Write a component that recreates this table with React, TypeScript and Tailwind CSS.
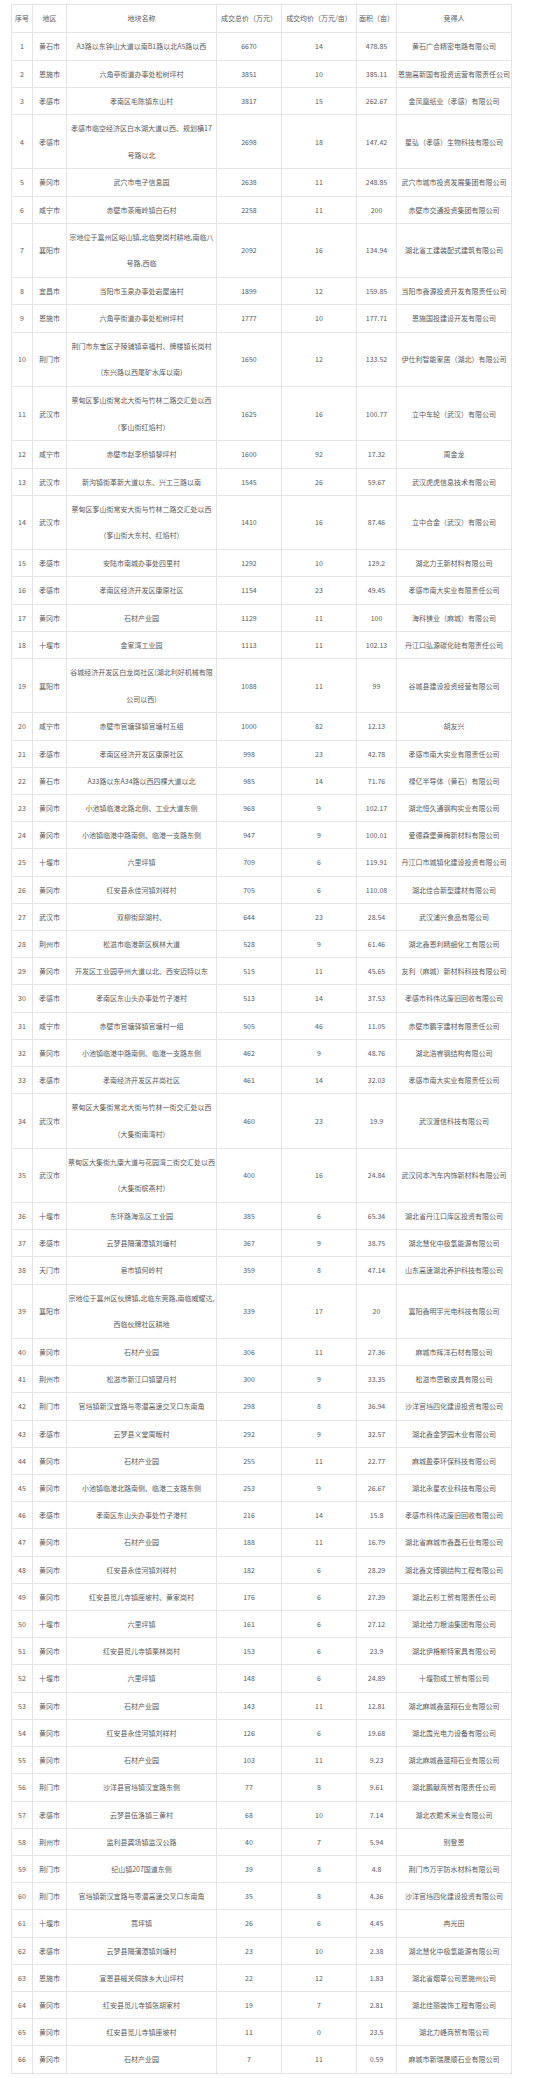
import React from "react";

type Row = [number, string, string | [string, string], string, string, string, string];

const rows: Row[] = [
  [1, "黄石市", "A3路以东钟山大道以南B1路以北A5路以西", "6670", "14", "478.85", "黄石广合精密电路有限公司"],
  [2, "恩施市", "六角亭街道办事处松树坪村", "3851", "10", "385.11", "恩施高新国有投资运营有限责任公司"],
  [3, "孝感市", "孝南区毛陈镇东山村", "3817", "15", "262.67", "金凤凰纸业（孝感）有限公司"],
  [4, "孝感市", ["孝感市临空经济区白水湖大道以西、规划横17", "号路以北"], "2698", "18", "147.42", "星弘（孝感）生物科技有限公司"],
  [5, "黄冈市", "武穴市电子信息园", "2638", "11", "248.85", "武穴市城市投资发展集团有限公司"],
  [6, "咸宁市", "赤壁市茶庵岭镇白石村", "2258", "11", "200", "赤壁市交通投资集团有限公司"],
  [7, "襄阳市", ["宗地位于襄州区峪山镇,北临樊岗村耕地,南临八", "号路,西临"], "2092", "16", "134.94", "湖北省工建装配式建筑有限公司"],
  [8, "宜昌市", "当阳市玉泉办事处岩屋庙村", "1899", "12", "159.85", "当阳市鑫源投资开发有限责任公司"],
  [9, "恩施市", "六角亭街道办事处松树坪村", "1777", "10", "177.71", "恩施国投建设开发有限公司"],
  [10, "荆门市", ["荆门市东宝区子陵铺镇幸福村、牌楼镇长岗村", "(东兴路以西尾矿水库以南)"], "1650", "12", "133.52", "伊仕利智能家居（湖北）有限公司"],
  [11, "武汉市", ["蔡甸区奓山街常北大街与竹林二路交汇处以西", "（奓山街红焰村）"], "1625", "16", "100.77", "立中车轮（武汉）有限公司"],
  [12, "咸宁市", "赤壁市赵李桥镇黎坪村", "1600", "92", "17.32", "周金龙"],
  [13, "武汉市", "新沟镇街革新大道以东、兴工三路以南", "1545", "26", "59.67", "武汉虎虎信息技术有限公司"],
  [14, "武汉市", ["蔡甸区奓山街常安大街与竹林二路交汇处以西", "（奓山街大东村、红焰村）"], "1410", "16", "87.46", "立中合金（武汉）有限公司"],
  [15, "孝感市", "安陆市南城办事处四里村", "1292", "10", "129.2", "湖北力王新材料有限公司"],
  [16, "孝感市", "孝南区经济开发区康原社区", "1154", "23", "49.45", "孝感市南大实业有限责任公司"],
  [17, "黄冈市", "石材产业园", "1129", "11", "100", "海科镁业（麻城）有限公司"],
  [18, "十堰市", "金家湾工业园", "1113", "11", "102.13", "丹江口弘源碳化硅有限责任公司"],
  [19, "襄阳市", ["谷城经济开发区白龙岗社区(湖北利好机械有限", "公司以西)"], "1088", "11", "99", "谷城县建设投资经营有限公司"],
  [20, "咸宁市", "赤壁市官塘驿镇官塘村五组", "1000", "82", "12.13", "胡友兴"],
  [21, "孝感市", "孝南区经济开发区康原社区", "998", "23", "42.78", "孝感市南大实业有限责任公司"],
  [22, "黄石市", "A33路以东A34路以西四棵大道以北", "985", "14", "71.76", "禄亿半导体（黄石）有限公司"],
  [23, "黄冈市", "小池镇临港北路北侧、工业大道东侧", "968", "9", "102.17", "湖北恒久通钢构实业有限公司"],
  [24, "黄冈市", "小池镇临港中路南侧、临港一支路东侧", "947", "9", "100.01", "爱德森堡黄梅新材料有限公司"],
  [25, "十堰市", "六里坪镇", "709", "6", "119.91", "丹江口市城镇化建设投资有限公司"],
  [26, "黄冈市", "红安县永佳河镇刘祥村", "705", "6", "110.08", "湖北佳合新型建材有限公司"],
  [27, "武汉市", "双柳街邱湖村、", "644", "23", "28.54", "武汉浦兴食品有限公司"],
  [28, "荆州市", "松滋市临港新区枫林大道", "528", "9", "61.46", "湖北鑫恩利精细化工有限公司"],
  [29, "黄冈市", "开发区工业园亭州大道以北、西安迈特以东", "515", "11", "45.65", "友利（麻城）新材料科技有限公司"],
  [30, "孝感市", "孝南区东山头办事处竹子港村", "513", "14", "37.53", "孝感市科伟达废旧回收有限公司"],
  [31, "咸宁市", "赤壁市官塘驿镇官塘村一组", "505", "46", "11.05", "赤壁市鹏宇建材有限责任公司"],
  [32, "黄冈市", "小池镇临港中路南侧、临港一支路东侧", "462", "9", "48.76", "湖北浩睿钢结构有限公司"],
  [33, "孝感市", "孝南经济开发区井岗社区", "461", "14", "32.03", "孝感市南大实业有限责任公司"],
  [34, "武汉市", ["蔡甸区大集街常北大街与竹林一街交汇处以西", "（大集街南湾村）"], "460", "23", "19.9", "武汉渡信科技有限公司"],
  [35, "武汉市", ["蔡甸区大集街九康大道与花园湾二街交汇处以西", "（大集街槟燕村）"], "400", "16", "24.84", "武汉冈本汽车内饰新材料有限公司"],
  [36, "十堰市", "东环路海泓区工业园", "385", "6", "65.34", "湖北省丹江口库区投资有限公司"],
  [37, "孝感市", "云梦县隔蒲潭镇刘塘村", "367", "9", "38.75", "湖北慧化中极氢能源有限公司"],
  [38, "天门市", "皂市镇何岭村", "359", "8", "47.14", "山东高速湖北养护科技有限公司"],
  [39, "襄阳市", ["宗地位于襄州区伙牌镇,北临东莞路,南临威耀达,", "西临伙牌社区耕地"], "339", "17", "20", "襄阳鑫明宇光电科技有限公司"],
  [40, "黄冈市", "石材产业园", "306", "11", "27.36", "麻城市辉洋石材有限公司"],
  [41, "荆州市", "松滋市新江口镇望月村", "300", "9", "33.35", "松滋市思敏皮具有限公司"],
  [42, "荆门市", "官垱镇新汉宜路与枣潜高速交叉口东南角", "298", "8", "36.94", "沙洋官垱四化建设投资有限公司"],
  [43, "孝感市", "云梦县义堂周畈村", "292", "9", "32.57", "湖北鑫金梦园木业有限公司"],
  [44, "黄冈市", "石材产业园", "255", "11", "22.77", "麻城盈泰环保科技有限公司"],
  [45, "黄冈市", "小池镇临港北路南侧、临港二支路东侧", "253", "9", "26.67", "湖北永星农业科技有限公司"],
  [46, "孝感市", "孝南区东山头办事处竹子港村", "216", "14", "15.8", "孝感市科伟达废旧回收有限公司"],
  [47, "黄冈市", "石材产业园", "188", "11", "16.79", "湖北省麻城市鑫磊石业有限公司"],
  [48, "黄冈市", "红安县永佳河镇刘祥村", "182", "6", "28.29", "湖北鑫文博钢结构工程有限公司"],
  [49, "黄冈市", "红安县觅儿寺镇座坡村、黄家岗村", "176", "6", "27.39", "湖北云杉工贸有限责任公司"],
  [50, "十堰市", "六里坪镇", "161", "6", "27.12", "湖北给力粮油集团有限公司"],
  [51, "黄冈市", "红安县觅儿寺镇栗林岗村", "153", "6", "23.9", "湖北伊格斯特家具有限公司"],
  [52, "十堰市", "六里坪镇", "148", "6", "24.89", "十堰勤成工贸有限公司"],
  [53, "黄冈市", "石材产业园", "143", "11", "12.81", "湖北麻城鑫蓝翔石业有限公司"],
  [54, "黄冈市", "红安县永佳河镇刘祥村", "126", "6", "19.68", "湖北霞光电力设备有限公司"],
  [55, "黄冈市", "石材产业园", "103", "11", "9.23", "湖北麻城鑫蓝翔石业有限公司"],
  [56, "荆门市", "沙洋县官垱镇汉宜路东侧", "77", "8", "9.61", "湖北鹏献商贸有限责任公司"],
  [57, "孝感市", "云梦县伍洛镇三黄村", "68", "10", "7.14", "湖北农瞻禾米业有限公司"],
  [58, "荆州市", "监利县龚场镇监汉公路", "40", "7", "5.94", "别登恩"],
  [59, "荆门市", "纪山镇207国道东侧", "39", "8", "4.8", "荆门市万宇防水材料有限公司"],
  [60, "荆门市", "官垱镇新汉宜路与枣潜高速交叉口东南角", "35", "8", "4.36", "沙洋官垱四化建设投资有限公司"],
  [61, "十堰市", "蒿坪镇", "26", "6", "4.45", "冉光田"],
  [62, "孝感市", "云梦县隔蒲潭镇刘塘村", "23", "10", "2.38", "湖北慧化中极氢能源有限公司"],
  [63, "恩施市", "宣恩县椒关侗族乡大山坪村", "22", "12", "1.83", "湖北省烟草公司恩施州公司"],
  [64, "黄冈市", "红安县觅儿寺镇张胡家村", "19", "7", "2.81", "湖北佳丽装饰工程有限公司"],
  [65, "黄冈市", "红安县觅儿寺镇座坡村", "11", "0", "23.5", "湖北力峰商贸有限公司"],
  [66, "黄冈市", "石材产业园", "7", "11", "0.59", "麻城市新瑞晟顺石业有限公司"],
];

const headers = ["序号", "地区", "地块名称", "成交总价（万元）", "成交均价（万元/亩）", "面积（亩）", "竞得人"];

function Cell({ children, tall }: { children: React.ReactNode; tall?: boolean }) {
  return (
    <div
      className={
        "bg-white flex items-center justify-center text-center whitespace-nowrap " +
        (tall ? "leading-[26.7px]" : "leading-[26.2px]")
      }
    >
      {children}
    </div>
  );
}

export default function App() {
  return (
    <div className="w-[550px] h-[2078px] bg-white pt-[4px] pl-[11px] font-['Noto_Sans_CJK_SC','Noto_Sans',sans-serif] text-[7px] text-[#5a5a5a]">
      <div className="w-[501px] grid grid-cols-[20px_33px_149px_64px_74px_39px_114px] gap-px bg-[#e4e4e4] border border-[#e4e4e4]">
        {headers.map((h) => (
          <div key={h} className="bg-white flex items-center justify-center whitespace-nowrap h-[27.3px]">
            {h}
          </div>
        ))}
        {rows.map((r) => {
          const tall = Array.isArray(r[2]);
          return (
            <React.Fragment key={r[0]}>
              <Cell>{r[0]}</Cell>
              <Cell>{r[1]}</Cell>
              <Cell tall={tall}>
                {Array.isArray(r[2]) ? (
                  <span>
                    {r[2][0]}
                    <br />
                    {r[2][1]}
                  </span>
                ) : (
                  r[2]
                )}
              </Cell>
              <Cell>{r[3]}</Cell>
              <Cell>{r[4]}</Cell>
              <Cell>{r[5]}</Cell>
              <Cell>{r[6]}</Cell>
            </React.Fragment>
          );
        })}
      </div>
    </div>
  );
}
